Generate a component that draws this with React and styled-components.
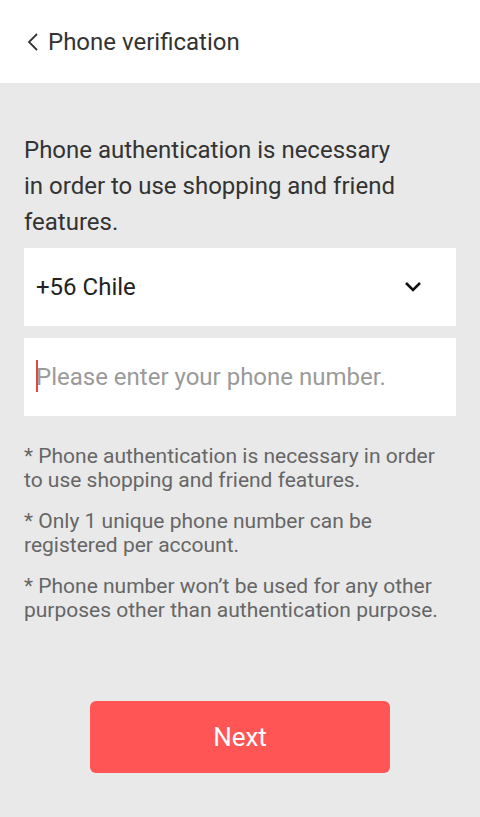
import React from "react";
import styled, { createGlobalStyle } from "styled-components";

const Global = createGlobalStyle`
  html, body {
    margin: 0;
    padding: 0;
    background: #e9e9e9;
    font-family: Roboto, "Noto Sans", sans-serif;
  }
`;

export default function App() {
  return (
    <Page>
      <Global />
      <Header>
        <Back>
          <svg width="12" height="20" viewBox="0 0 12 20">
            <path d="M10 2 L2 10 L10 18" fill="none" stroke="#333" strokeWidth="1.8" />
          </svg>
        </Back>
        <Title>Phone verification</Title>
      </Header>
      <Body>
        <Intro>
          Phone authentication is necessary
          <br />
          in order to use shopping and friend
          <br />
          features.
        </Intro>
        <Field>
          <span>+56 Chile</span>
          <Chevron>
            <svg width="18" height="12" viewBox="0 0 18 12">
              <path d="M2 2 L9 9 L16 2" fill="none" stroke="#111" strokeWidth="2.6" />
            </svg>
          </Chevron>
        </Field>
        <Field>
          <Caret />
          <Placeholder>Please enter your phone number.</Placeholder>
        </Field>
        <Notes>
          <p>* Phone authentication is necessary in order to use shopping and friend features.</p>
          <p>* Only 1 unique phone number can be registered per account.</p>
          <p>* Phone number won’t be used for any other purposes other than authentication purpose.</p>
        </Notes>
        <Button>Next</Button>
      </Body>
    </Page>
  );
}

const Page = styled.div`
  width: 480px;
  min-height: 817px;
  background: #e9e9e9;
`;

const Header = styled.div`
  height: 83px;
  background: #fff;
  display: flex;
  align-items: center;
  padding-left: 27px;
  box-sizing: border-box;
`;

const Back = styled.div`
  display: flex;
  align-items: center;
  margin-right: 9px;
`;

const Title = styled.h1`
  margin: 0;
  font-size: 24px;
  font-weight: 400;
  color: #333;
`;

const Body = styled.div`
  padding: 0 24px;
  display: flex;
  flex-direction: column;
`;

const Intro = styled.p`
  margin: 49px 0 8px;
  font-size: 24px;
  line-height: 36px;
  color: #333;
`;

const Field = styled.div`
  height: 78px;
  background: #fff;
  display: flex;
  align-items: center;
  justify-content: space-between;
  padding: 0 12px;
  margin-bottom: 12px;
  box-sizing: border-box;
  font-size: 24px;
  color: #222;
  position: relative;
`;

const Chevron = styled.div`
  display: flex;
  margin-right: 22px;
`;

const Caret = styled.div`
  position: absolute;
  left: 12px;
  top: 22px;
  width: 2px;
  height: 32px;
  background: #e04848;
`;

const Placeholder = styled.span`
  color: #9a9a9a;
`;

const Notes = styled.div`
  margin-top: 16px;
  p {
    margin: 0 0 17px;
    font-size: 21px;
    line-height: 24px;
    color: #666;
  }
`;

const Button = styled.button`
  align-self: center;
  width: 300px;
  height: 72px;
  margin-top: 62px;
  border: none;
  border-radius: 6px;
  background: #ff5555;
  color: #fff;
  font-family: Roboto, sans-serif;
  font-size: 26px;
`;
